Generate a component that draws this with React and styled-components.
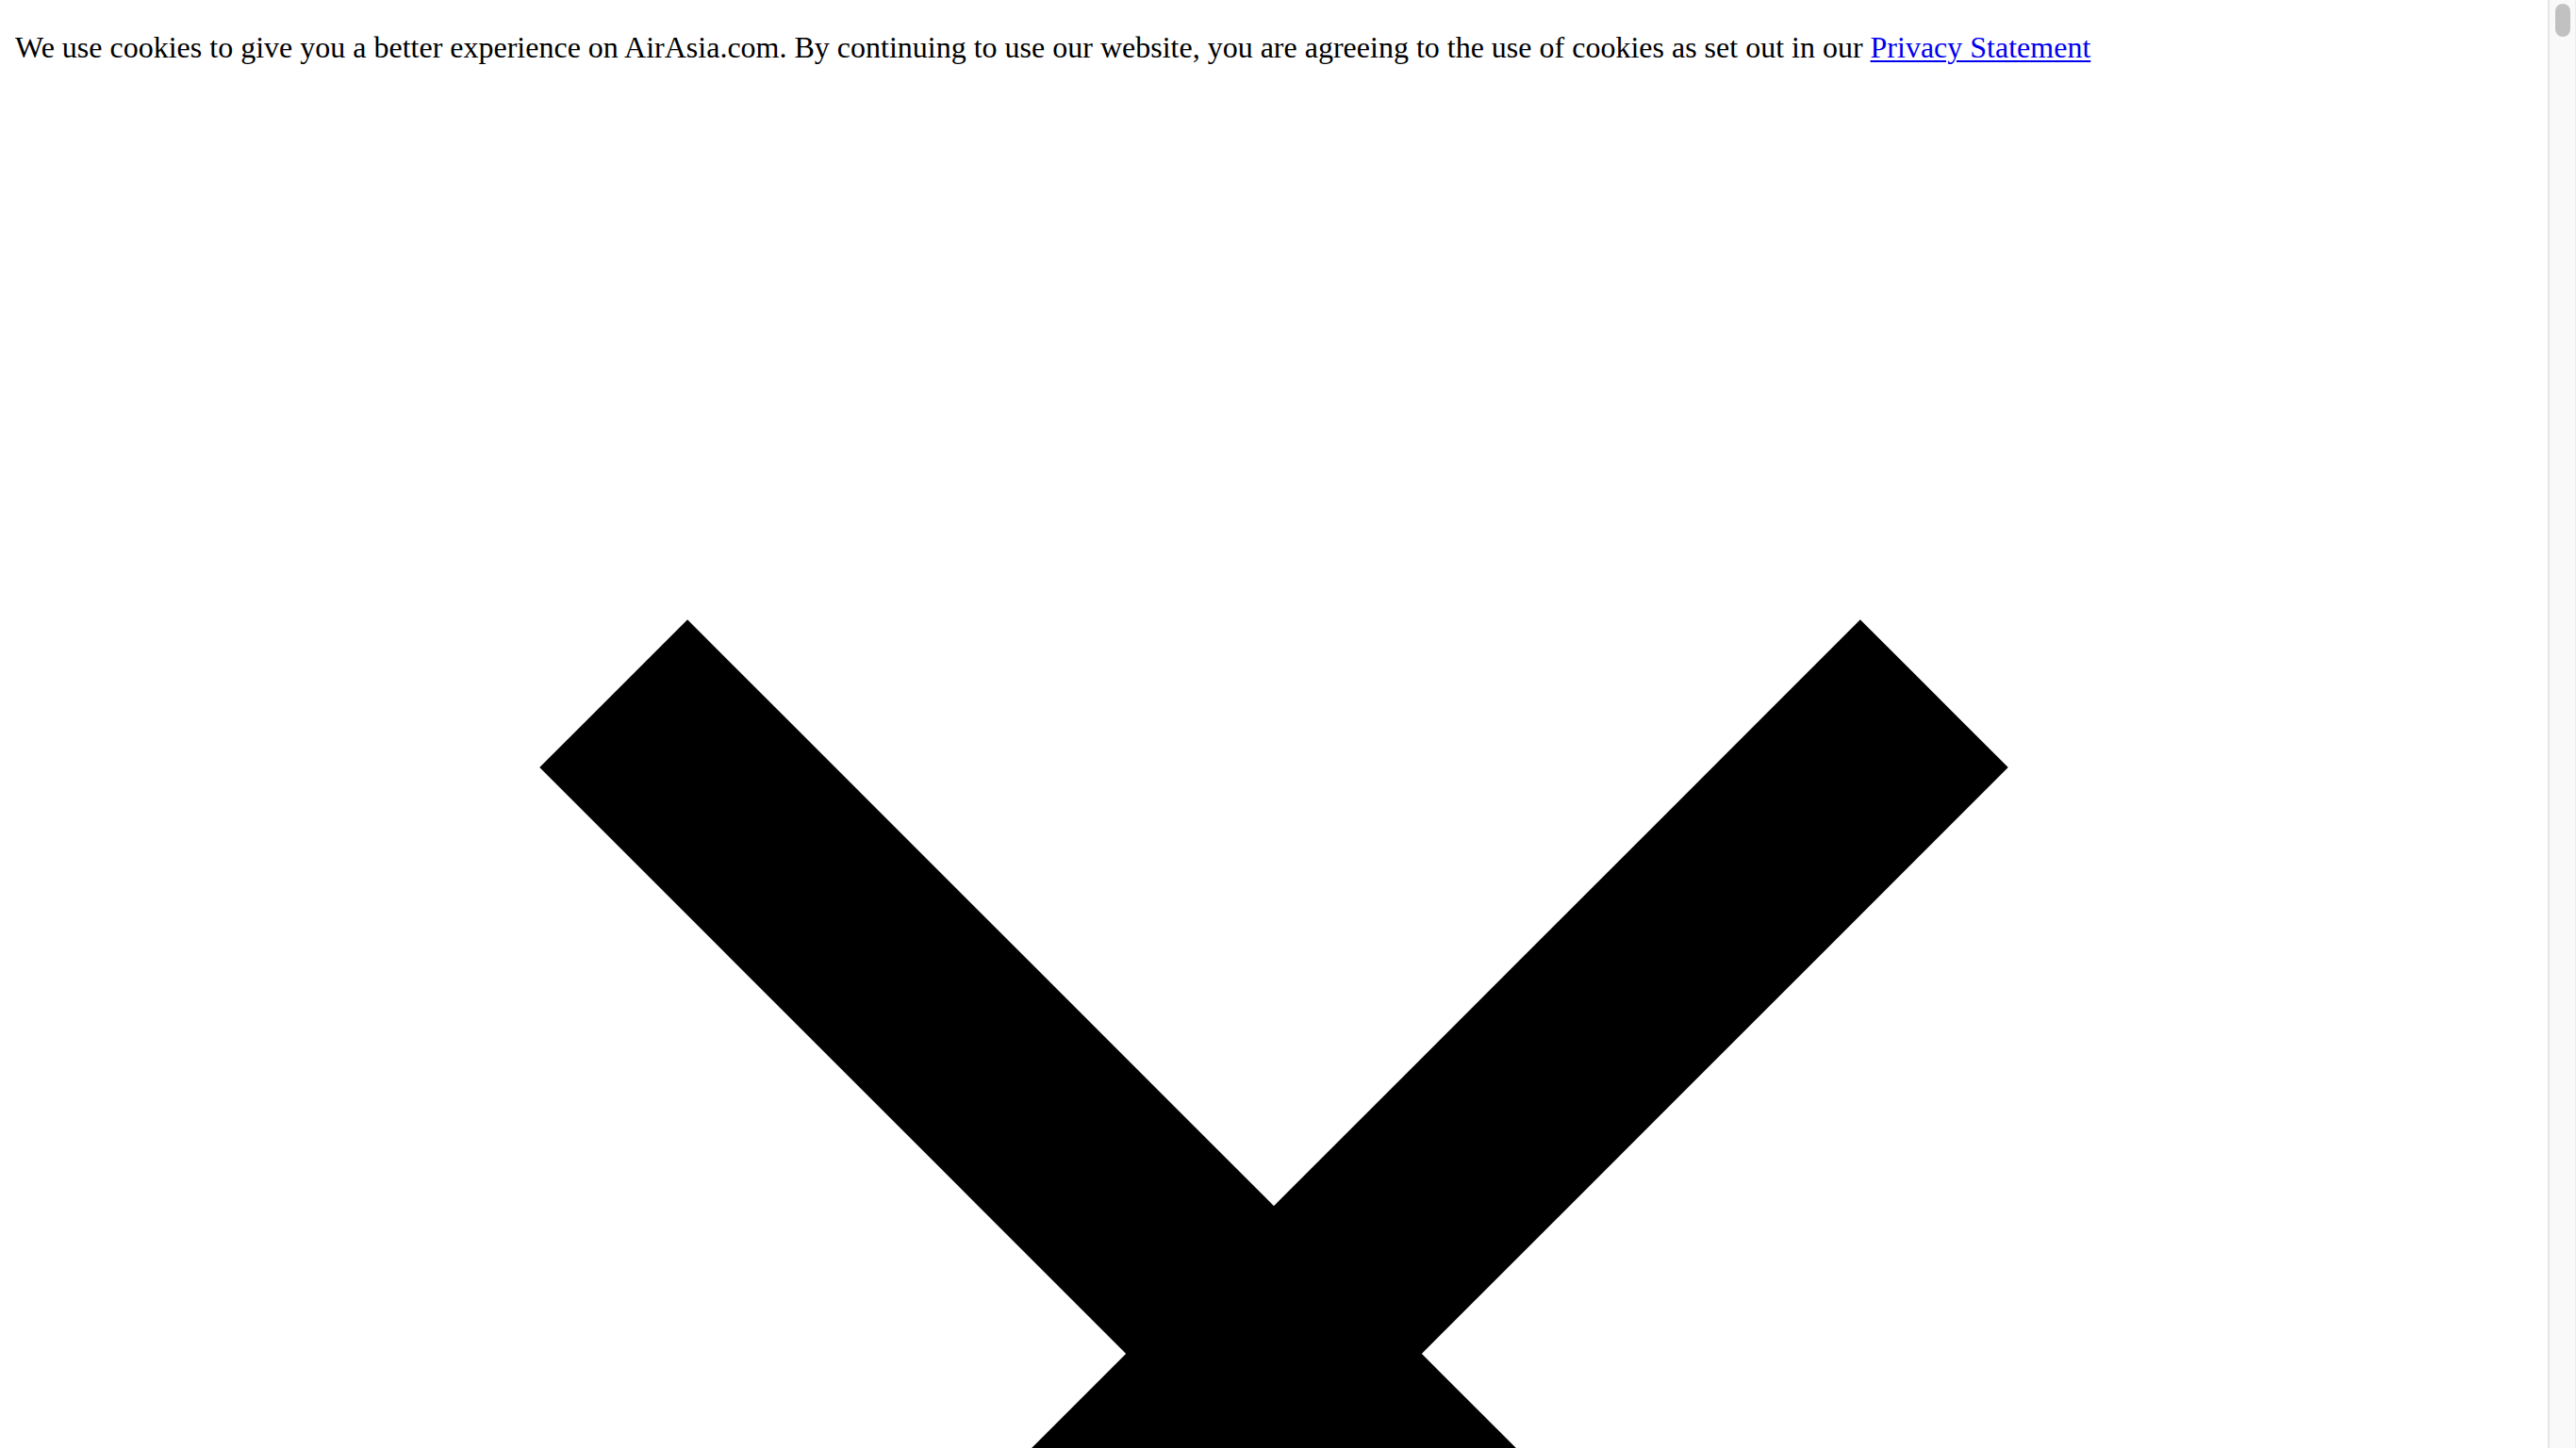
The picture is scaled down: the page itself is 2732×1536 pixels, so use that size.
import React from 'react'
import styled, { createGlobalStyle } from "styled-components";

const GlobalStyle = createGlobalStyle`
    html {
        background: #ffffff;
    }
    body {
        margin: 16px 46px 16px 16px;
        font-family: "Liberation Serif", "Times New Roman", serif;
        font-size: 32px;
        color: #000000;
    }
`;

const Notice = styled.p`
    margin: 16px 0 32px;
`;

const PolicyLink = styled.a`
    color: #0000ee;
    text-decoration: underline;
    text-decoration-thickness: 2px;
    text-underline-offset: 3px;
    cursor: pointer;
`;

const CloseIcon = styled.svg`
    width: 100%;
    display: inline;
    fill: #000000;
`;

// window scrollbar, drawn over the page edge
const ScrollTrack = styled.div`
    position: fixed;
    top: 0;
    right: 0;
    bottom: 0;
    width: 28px;
    background: #f9f9f9;
    border-left: 2px solid #e6e6e6;
    box-shadow: inset -1px 0 0 #ededed;
`;

const ScrollThumb = styled.div`
    width: 16px;
    height: 35px;
    margin: 4px 0 0 6px;
    border-radius: 8px;
    background: #c1c1c1;
`;

const Close = () => (
    <CloseIcon viewBox="0 0 24 24" xmlns="http://www.w3.org/2000/svg">
        <path d="M19 6.41L17.59 5 12 10.59 6.41 5 5 6.41 10.59 12 5 17.59 6.41 19 12 13.41 17.59 19 19 17.59 13.41 12z" />
    </CloseIcon>
);

const App = () => {
    return (
        <>
            <GlobalStyle />
            <Notice>
                We use cookies to give you a better experience on AirAsia.com. By continuing to use our website, you are agreeing to the use of cookies as set out in our{" "}
                <PolicyLink href="#">Privacy Statement</PolicyLink>
            </Notice>
            <Close />
            <ScrollTrack>
                <ScrollThumb />
            </ScrollTrack>
        </>
    );
};

export default App
